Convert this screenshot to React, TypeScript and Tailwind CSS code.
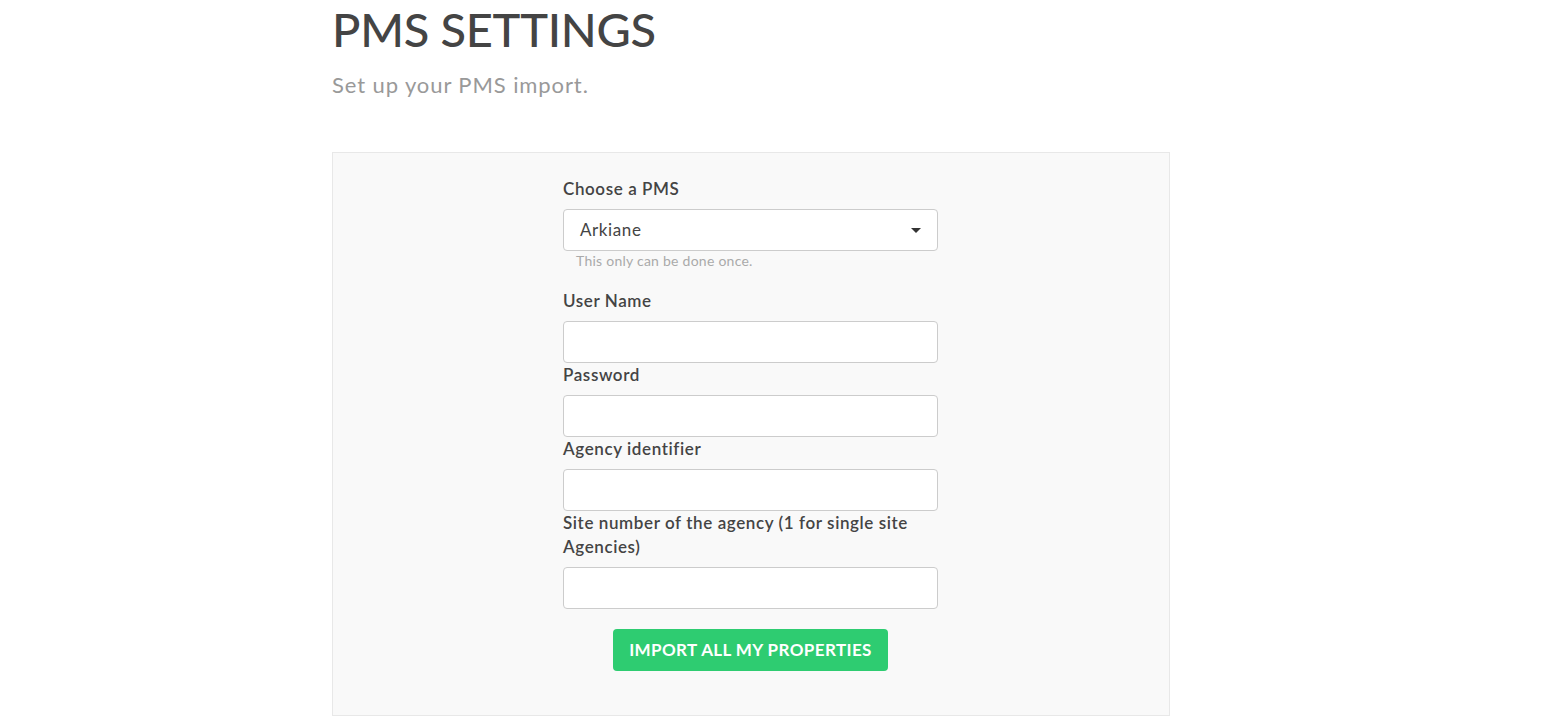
import React from 'react';

const Field: React.FC<{ label: string }> = ({ label }) => (
  <div className="flex flex-col">
    <label className="mb-[8px] text-[17px] font-semibold leading-[24px] tracking-[0.6px] text-[#444]">{label}</label>
    <input className="h-[42px] w-full rounded-[4px] border border-[#ccc] bg-white px-3 text-[17px] outline-none" />
  </div>
);

export default function App() {
  return (
    <div className="min-h-screen bg-white font-['Lato','Open_Sans',sans-serif] text-[#444]">
      <div className="ml-[332px] w-[838px]">
        <h1 className="pt-[3px] text-[47px] font-medium leading-[52px] tracking-[-0.3px] text-[#444]">PMS SETTINGS</h1>
        <p className="mt-[16px] text-[22px] leading-[28px] tracking-[0.9px] text-[#999]">Set up your PMS import.</p>

        <div className="mt-[53px] h-[564px] border border-[#e8e8e8] bg-[#f9f9f9]">
          <div className="ml-[230px] w-[375px] pt-[24px]">
            <label className="mb-[8px] block text-[17px] font-semibold leading-[24px] tracking-[0.6px] text-[#444]">Choose a PMS</label>
            <div className="relative flex h-[42px] items-center rounded-[4px] border border-[#ccc] bg-white pl-[16px]">
              <span className="text-[17px] tracking-[0.6px] text-[#444]">Arkiane</span>
              <svg className="absolute right-[16px] top-[18px]" width="10" height="5" viewBox="0 0 10 5">
                <path d="M0 0 L10 0 L5 5 Z" fill="#333" />
              </svg>
            </div>
            <p className="pl-[13px] text-[14px] leading-[20px] tracking-[0.25px] text-[#aaa]">This only can be done once.</p>

            <div className="mt-[18px] flex flex-col">
              <Field label="User Name" />
              <Field label="Password" />
              <Field label="Agency identifier" />
              <Field label="Site number of the agency (1 for single site Agencies)" />
            </div>

            <div className="mt-[20px] flex justify-center">
              <button className="h-[42px] rounded-[4px] bg-[#2ecc71] px-[16px] text-[17px] font-bold uppercase tracking-[0.4px] text-white">
                Import all my properties
              </button>
            </div>
          </div>
        </div>
      </div>
    </div>
  );
}
